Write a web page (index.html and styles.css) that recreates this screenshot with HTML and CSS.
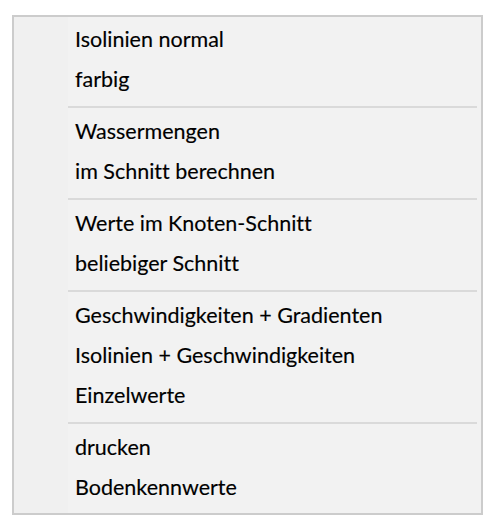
FILE: index.html
```html
<!DOCTYPE html>
<html>
<head>
<meta charset="utf-8">
<link rel="stylesheet" href="styles.css">
</head>
<body>
<div class="menu">
  <div class="item">Isolinien normal</div>
  <div class="item">farbig</div>
  <div class="sep"></div>
  <div class="item">Wassermengen</div>
  <div class="item">im Schnitt berechnen</div>
  <div class="sep"></div>
  <div class="item">Werte im Knoten-Schnitt</div>
  <div class="item">beliebiger Schnitt</div>
  <div class="sep"></div>
  <div class="item">Geschwindigkeiten + Gradienten</div>
  <div class="item">Isolinien + Geschwindigkeiten</div>
  <div class="item">Einzelwerte</div>
  <div class="sep"></div>
  <div class="item">drucken</div>
  <div class="item">Bodenkennwerte</div>
</div>
</body>
</html>
```

FILE: styles.css
```css
html, body {
  margin: 0;
  padding: 0;
  background: #ffffff;
}
.menu {
  margin: 15px 0 0 12px;
  width: 467px;
  padding: 4px 0;
  border: 2px solid #cccccc;
  background: linear-gradient(to right, #f0f0f0 0, #f0f0f0 54px, #f2f2f2 54px);
  font-family: Lato, "Open Sans", sans-serif;
  font-size: 21.5px;
  color: #000000;
  -webkit-text-stroke: 0.15px #000000;
  font-variant-ligatures: none;
  display: flex;
  flex-direction: column;
}
.item {
  height: 40px;
  line-height: 37px;
  padding-left: 61px;
  padding-bottom: 3px;
  box-sizing: border-box;
  white-space: nowrap;
}
.sep {
  height: 12px;
  display: flex;
  align-items: center;
  padding: 0 4px 0 54px;
}
.sep::after {
  content: "";
  flex: 1;
  height: 2px;
  background: #dadada;
}
```
